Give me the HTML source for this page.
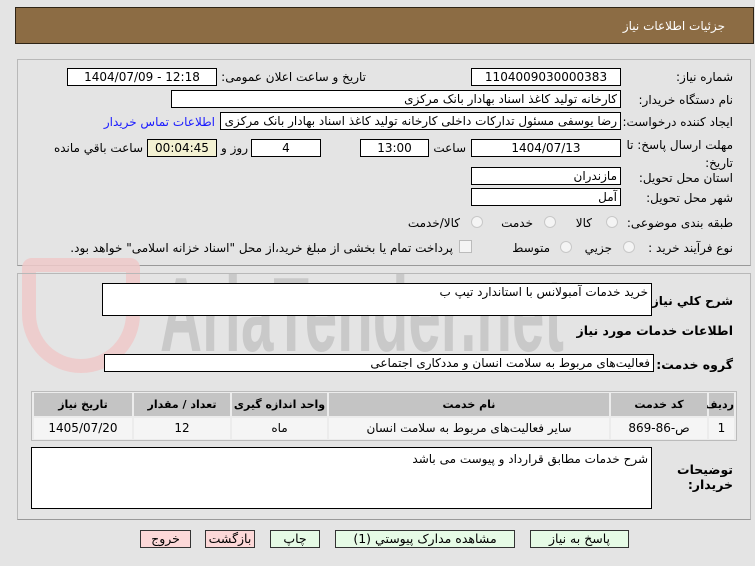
<!DOCTYPE html>
<html><head><meta charset="utf-8"><style>
*{box-sizing:border-box;margin:0;padding:0}
body{width:755px;height:566px;background:#e4e4e4;font-family:"DejaVu Sans","Liberation Sans",sans-serif;font-size:11.5px;color:#000;position:relative;overflow:hidden}
.a{position:absolute;white-space:nowrap}
.in{position:absolute;background:#fff;border:1px solid #000;height:18px;line-height:16px;font-size:12px;white-space:nowrap;overflow:hidden}
.c{text-align:center}
.rt{direction:rtl;text-align:right;padding-right:3px}
.lbl{position:absolute;direction:rtl;text-align:right;white-space:nowrap;font-size:12px}
.rad{position:absolute;width:12px;height:12px;border-radius:50%;border:1px solid #c8c8c8;background:#f4f4f4}
.btn{position:absolute;top:530px;height:18px;border:1px solid #333;font-size:12.5px;line-height:16px;text-align:center;direction:rtl}
.b{font-weight:bold}
</style></head><body>
<div class="a" style="left:15px;top:7px;width:739px;height:37px;background:#8c6c44;border:1px solid #2e2416"></div>
<div class="lbl" style="right:30px;top:19px;color:#fff;font-size:12px">جزئیات اطلاعات نیاز</div>

<div class="a" style="left:17px;top:59px;width:734px;height:207px;border:1px solid #b8b8b8;border-bottom-color:#999"></div>

<div class="lbl" style="right:22px;top:70px">شماره نیاز:</div>
<div class="in c" style="left:471px;top:68px;width:150px">1104009030000383</div>
<div class="lbl" style="right:389px;top:70px">تاریخ و ساعت اعلان عمومی:</div>
<div class="in c" style="left:67px;top:68px;width:150px">1404/07/09 - 12:18</div>

<div class="lbl" style="right:22px;top:93px">نام دستگاه خریدار:</div>
<div class="in rt" style="left:171px;top:90px;width:450px">کارخانه تولید کاغذ اسناد بهادار بانک مرکزی</div>

<div class="lbl" style="right:22px;top:115px">ایجاد کننده درخواست:</div>
<div class="in rt" style="left:220px;top:112px;width:401px">رضا یوسفی مسئول تدارکات داخلی کارخانه تولید کاغذ اسناد بهادار بانک مرکزی</div>
<div class="lbl" style="right:540px;top:115px;color:#1a1aff">اطلاعات تماس خریدار</div>

<div class="lbl" style="right:22px;top:138px">مهلت ارسال پاسخ: تا</div>
<div class="lbl" style="right:22px;top:156px">تاریخ:</div>
<div class="in c" style="left:471px;top:139px;width:150px">1404/07/13</div>
<div class="lbl" style="right:289px;top:141px">ساعت</div>
<div class="in c" style="left:360px;top:139px;width:69px">13:00</div>
<div class="in c" style="left:251px;top:139px;width:70px">4</div>
<div class="lbl" style="right:507px;top:141px">روز و</div>
<div class="in c" style="left:147px;top:139px;width:70px;background:#f3f1d2">00:04:45</div>
<div class="lbl" style="right:612px;top:141px">ساعت باقي مانده</div>

<div class="lbl" style="right:22px;top:171px">استان محل تحویل:</div>
<div class="in rt" style="left:471px;top:167px;width:150px">مازندران</div>
<div class="lbl" style="right:22px;top:191px">شهر محل تحویل:</div>
<div class="in rt" style="left:471px;top:188px;width:150px">آمل</div>

<div class="lbl" style="right:22px;top:216px">طبقه بندی موضوعی:</div>
<div class="rad" style="left:606px;top:216px"></div><div class="lbl" style="right:163px;top:216px">کالا</div>
<div class="rad" style="left:544px;top:216px"></div><div class="lbl" style="right:222px;top:216px">خدمت</div>
<div class="rad" style="left:471px;top:216px"></div><div class="lbl" style="right:295px;top:216px">کالا/خدمت</div>

<div class="lbl" style="right:22px;top:241px">نوع فرآیند خرید :</div>
<div class="rad" style="left:623px;top:241px"></div><div class="lbl" style="right:143px;top:241px">جزیي</div>
<div class="rad" style="left:560px;top:241px"></div><div class="lbl" style="right:205px;top:241px">متوسط</div>
<div class="a" style="left:459px;top:240px;width:13px;height:13px;border:1px solid #bbb;background:#f4f4f4"></div>
<div class="lbl" style="right:302px;top:241px">پرداخت تمام یا بخشی از مبلغ خرید،از محل "اسناد خزانه اسلامی" خواهد بود.</div>

<div class="a" style="left:160px;top:262px;font-size:106px;line-height:1;font-weight:bold;color:#c9c9c9;font-family:'Liberation Sans',sans-serif;transform:scaleX(0.55);transform-origin:left top">AriaTender.net</div>
<div class="a" style="left:22px;top:258px;width:118px;height:115px;border:14px solid #efc9c9;border-radius:10px 10px 60px 60px;opacity:.85"></div>

<div class="a" style="left:17px;top:273px;width:734px;height:247px;border:1px solid #b8b8b8;border-bottom-color:#999"></div>
<div class="lbl b" style="right:22px;top:294px;font-size:12px">شرح کلي نیاز:</div>
<div class="in rt" style="left:102px;top:283px;width:550px;height:33px">خرید خدمات آمبولانس  با استاندارد تیپ ب</div>
<div class="lbl b" style="right:22px;top:323px;font-size:12.5px">اطلاعات خدمات مورد نیاز</div>
<div class="lbl b" style="right:22px;top:357px;font-size:12.5px">گروه خدمت:</div>
<div class="in rt" style="left:104px;top:354px;width:550px">فعالیت‌های مربوط به سلامت انسان و مددکاری اجتماعی</div>

<div class="a" style="left:31px;top:391px;width:706px;height:50px;border:1px solid #bbb;background:#ececec"></div>
<div class="a" style="left:34px;top:393px;width:700px;height:23px;display:flex;direction:rtl;gap:2px;font-weight:bold;font-size:11px">
<div style="width:25px;background:#c4c4c4;text-align:center;line-height:23px">ردیف</div>
<div style="width:96px;background:#c4c4c4;text-align:center;line-height:23px">کد خدمت</div>
<div style="width:280px;background:#c4c4c4;text-align:center;line-height:23px">نام خدمت</div>
<div style="width:95px;background:#c4c4c4;text-align:center;line-height:23px">واحد اندازه گیری</div>
<div style="width:96px;background:#c4c4c4;text-align:center;line-height:23px">تعداد / مقدار</div>
<div style="width:98px;background:#c4c4c4;text-align:center;line-height:23px">تاریخ نیاز</div>
</div>
<div class="a" style="left:34px;top:418px;width:700px;height:21px;display:flex;direction:rtl;gap:2px;font-size:12px">
<div style="width:25px;background:#f5f5f5;text-align:center;line-height:21px">1</div>
<div style="width:96px;background:#f5f5f5;text-align:center;line-height:21px">ص-86-869</div>
<div style="width:280px;background:#f5f5f5;text-align:center;line-height:21px">سایر فعالیت‌های مربوط به سلامت انسان</div>
<div style="width:95px;background:#f5f5f5;text-align:center;line-height:21px">ماه</div>
<div style="width:96px;background:#f5f5f5;text-align:center;line-height:21px">12</div>
<div style="width:98px;background:#f5f5f5;text-align:center;line-height:21px">1405/07/20</div>
</div>

<div class="in rt" style="left:31px;top:447px;width:621px;height:62px;line-height:22px">شرح خدمات مطابق قرارداد و پیوست می باشد</div>
<div class="lbl b" style="right:22px;top:462px;font-size:12.5px">توضیحات</div>
<div class="lbl b" style="right:22px;top:477px;font-size:12.5px">خریدار:</div>

<div class="btn" style="left:140px;width:51px;background:#fcd8d8">خروج</div>
<div class="btn" style="left:205px;width:50px;background:#fcd8d8">بازگشت</div>
<div class="btn" style="left:270px;width:50px;background:#e6fbe6">چاپ</div>
<div class="btn" style="left:335px;width:180px;background:#e6fbe6">مشاهده مدارک پیوستي (1)</div>
<div class="btn" style="left:530px;width:99px;background:#e6fbe6">پاسخ به نیاز</div>
</body></html>
